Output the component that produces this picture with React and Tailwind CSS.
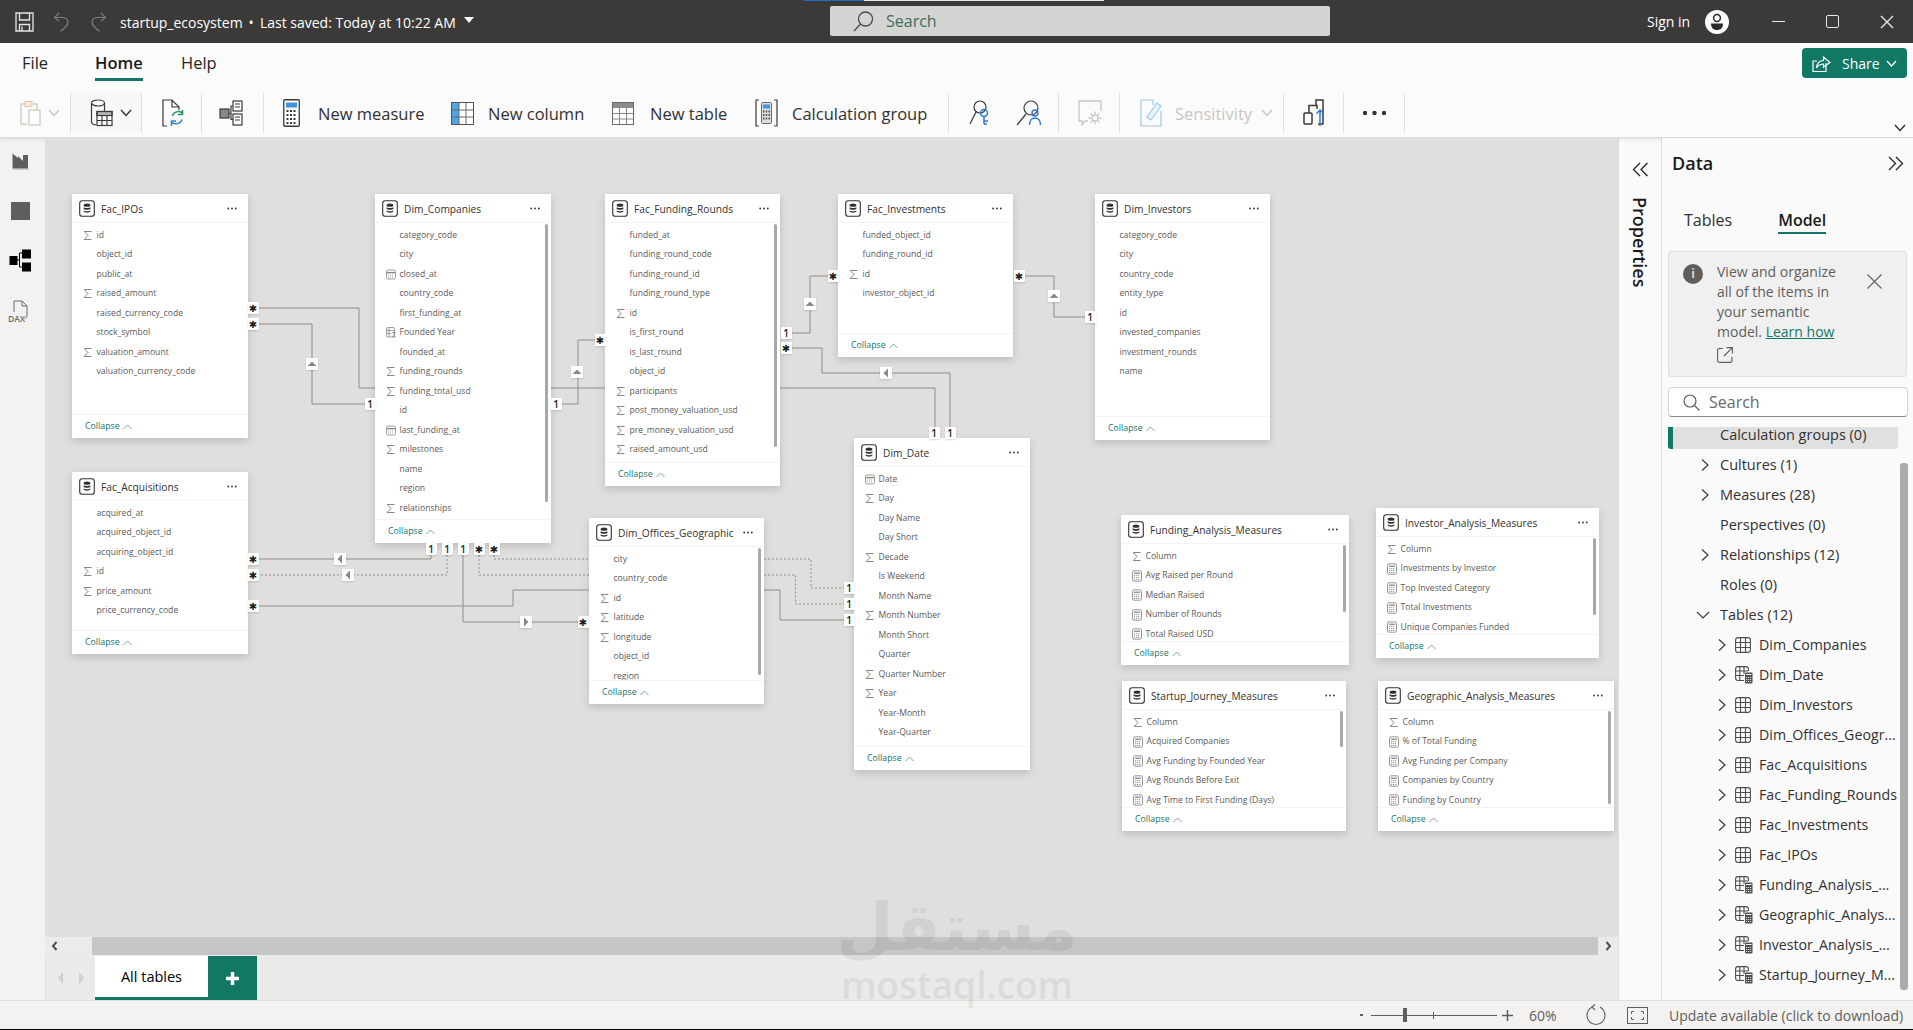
import React from 'react';

const FONT = '"Open Sans", "Noto Sans", sans-serif';

// ---------- small field icons ----------
const Sigma = () => (
  <svg width="10" height="11" viewBox="0 0 10 11" fill="none" stroke="#7a7876" strokeWidth="0.9">
    <path d="M8.5 1.5H1.2L5 5.5L1.2 9.5H8.5" />
  </svg>
);
const CalIcon = () => (
  <svg width="10" height="11" viewBox="0 0 10 11" fill="none" stroke="#8a8886" strokeWidth="0.8">
    <rect x="0.5" y="1" width="9" height="9" rx="1.5" />
    <path d="M0.5 3.6H9.5" strokeWidth="1.4" />
    <path d="M2 6H8M2 8H8" strokeDasharray="1 1" />
  </svg>
);
const CalcColIcon = () => (
  <svg width="11" height="11" viewBox="0 0 11 11" fill="none" stroke="#8a8886" strokeWidth="0.8">
    <rect x="0.5" y="0.5" width="8" height="9.5" rx="1.5" />
    <path d="M3 0.5V10M0.5 3.5H8.5M0.5 6.5H5" />
    <path d="M10 5.5H6.5L8.3 7.7L6.5 10H10" />
  </svg>
);
const MeasureIcon = () => (
  <svg width="10" height="12" viewBox="0 0 10 12" fill="none" stroke="#7d7b79" strokeWidth="0.8">
    <rect x="0.5" y="0.8" width="9" height="10.4" rx="1.6" />
    <path d="M2 3.2H8" strokeWidth="1.2" />
    <path d="M2 5.6H8M2 7.6H8M2 9.5H8" strokeDasharray="1.2 0.8" />
  </svg>
);
const FIELD = { s: Sigma, c: CalIcon, f: CalcColIcon, m: MeasureIcon };

const CardIcon = () => (
  <svg width="16" height="17" viewBox="0 0 16 17" fill="none">
    <rect x="0.7" y="0.7" width="14.6" height="15.6" rx="2.6" stroke="#323130" strokeWidth="1.1" />
    <ellipse cx="8" cy="5.2" rx="3.4" ry="1.6" fill="#323130" />
    <path d="M4.6 7.2C5.5 8.3 10.5 8.3 11.4 7.2V9C10.5 10.1 5.5 10.1 4.6 9Z" fill="#323130" />
    <path d="M4.6 10.4C5.5 11.5 10.5 11.5 11.4 10.4V11.6C10.5 13 5.5 13 4.6 11.6Z" fill="#323130" />
  </svg>
);

const Dots = () => (
  <svg width="10" height="3" viewBox="0 0 10 3" fill="#323130">
    <circle cx="1.2" cy="1.5" r="0.9" />
    <circle cx="5" cy="1.5" r="0.9" />
    <circle cx="8.8" cy="1.5" r="0.9" />
  </svg>
);

// ---------- model tables ----------
const f = (name, icon) => ({ name, icon });
const n = (...names) => names.map((name) => f(name));

const TABLES = [
  { name: 'Fac_IPOs', x: 72, y: 194, w: 176, h: 244, rows: [f('id', 's'), ...n('object_id', 'public_at'), f('raised_amount', 's'), ...n('raised_currency_code', 'stock_symbol'), f('valuation_amount', 's'), f('valuation_currency_code')] },
  { name: 'Dim_Companies', x: 375, y: 194, w: 176, h: 349, scroll: [30, 278], rows: [...n('category_code', 'city'), f('closed_at', 'c'), ...n('country_code', 'first_funding_at'), f('Founded Year', 'f'), f('founded_at'), f('funding_rounds', 's'), f('funding_total_usd', 's'), f('id'), f('last_funding_at', 'c'), f('milestones', 's'), ...n('name', 'region'), f('relationships', 's')] },
  { name: 'Fac_Funding_Rounds', x: 605, y: 194, w: 175, h: 292, scroll: [30, 223], rows: [...n('funded_at', 'funding_round_code', 'funding_round_id', 'funding_round_type'), f('id', 's'), ...n('is_first_round', 'is_last_round', 'object_id'), f('participants', 's'), f('post_money_valuation_usd', 's'), f('pre_money_valuation_usd', 's'), f('raised_amount_usd', 's')] },
  { name: 'Fac_Investments', x: 838, y: 194, w: 175, h: 163, rows: [...n('funded_object_id', 'funding_round_id'), f('id', 's'), f('investor_object_id')] },
  { name: 'Dim_Investors', x: 1095, y: 194, w: 175, h: 246, rows: n('category_code', 'city', 'country_code', 'entity_type', 'id', 'invested_companies', 'investment_rounds', 'name') },
  { name: 'Fac_Acquisitions', x: 72, y: 472, w: 176, h: 182, rows: [...n('acquired_at', 'acquired_object_id', 'acquiring_object_id'), f('id', 's'), f('price_amount', 's'), f('price_currency_code')] },
  { name: 'Dim_Offices_Geographic', x: 589, y: 518, w: 175, h: 186, scroll: [30, 127], rows: [...n('city', 'country_code'), f('id', 's'), f('latitude', 's'), f('longitude', 's'), ...n('object_id', 'region')] },
  { name: 'Dim_Date', x: 854, y: 438, w: 176, h: 332, rows: [f('Date', 'c'), f('Day', 's'), ...n('Day Name', 'Day Short'), f('Decade', 's'), ...n('Is Weekend', 'Month Name'), f('Month Number', 's'), ...n('Month Short', 'Quarter'), f('Quarter Number', 's'), f('Year', 's'), ...n('Year-Month', 'Year-Quarter')] },
  { name: 'Funding_Analysis_Measures', x: 1121, y: 515, w: 228, h: 150, scroll: [30, 67], rows: [f('Column', 's'), f('Avg Raised per Round', 'm'), f('Median Raised', 'm'), f('Number of Rounds', 'm'), f('Total Raised USD', 'm')] },
  { name: 'Investor_Analysis_Measures', x: 1376, y: 508, w: 223, h: 150, scroll: [30, 77], rows: [f('Column', 's'), f('Investments by Investor', 'm'), f('Top Invested Category', 'm'), f('Total Investments', 'm'), f('Unique Companies Funded', 'm')] },
  { name: 'Startup_Journey_Measures', x: 1122, y: 681, w: 224, h: 150, scroll: [30, 36], rows: [f('Column', 's'), f('Acquired Companies', 'm'), f('Avg Funding by Founded Year', 'm'), f('Avg Rounds Before Exit', 'm'), f('Avg Time to First Funding (Days)', 'm')] },
  { name: 'Geographic_Analysis_Measures', x: 1378, y: 681, w: 236, h: 150, scroll: [30, 93], rows: [f('Column', 's'), f('% of Total Funding', 'm'), f('Avg Funding per Company', 'm'), f('Companies by Country', 'm'), f('Funding by Country', 'm')] },
];

const TableCard = ({ t }) => (
  <div
    className="absolute flex flex-col bg-white shadow-[0_3px_8px_rgba(0,0,0,0.16)]"
    style={{ left: t.x - 45, top: t.y - 138, width: t.w, height: t.h }}
  >
    <div className="flex h-[29px] shrink-0 items-center border-b border-[#f5f4f3] pl-[7px] pr-[11px]">
      <CardIcon />
      <span className="ml-[6px] pt-[3px] text-[10.2px] text-[#323130]">{t.name}</span>
      <span className="ml-auto flex pt-[1px]"><Dots /></span>
    </div>
    <div className="min-h-0 flex-1 overflow-hidden pt-[2.5px]">
      {t.rows.map((r) => {
        const Icon = FIELD[r.icon];
        return (
          <div key={r.name} className="flex h-[19.5px] items-center pl-[11px] text-[8.6px] text-[#5b5957]">
            <span className="flex w-[13.5px] shrink-0 items-center">{Icon && <Icon />}</span>
            <span className="whitespace-nowrap">{r.name}</span>
          </div>
        );
      })}
    </div>
    <div className="flex h-[24px] shrink-0 items-center gap-[3px] border-t border-[#f5f4f3] pl-[13px] text-[8.8px] text-[#17756a]">
      Collapse
      <svg width="9" height="6" viewBox="0 0 9 6" fill="none" stroke="#5b8f86" strokeWidth="0.8"><path d="M0.5 5L4.5 1L8.5 5" /></svg>
    </div>
    {t.scroll && (
      <div className="absolute right-[3px] w-[3px] rounded-full bg-[#a8a8a8]" style={{ top: t.scroll[0], height: t.scroll[1] }} />
    )}
  </div>
);

// ---------- relationship lines ----------
const LINES = [
  { d: 'M259 308H359V388H375' },
  { d: 'M259 324H312V404H365' },
  { d: 'M562 404H578V340H595' },
  { d: 'M551 388H605' },
  { d: 'M780 388H935V428' },
  { d: 'M791 348H822V373H950V428' },
  { d: 'M791 333H810V276H828' },
  { d: 'M1024 276H1054V317H1085' },
  { d: 'M431 555V559H259' },
  { d: 'M447 555V575H259', dash: true },
  { d: 'M463 555V622H578' },
  { d: 'M259 606H513V590H589' },
  { d: 'M764 590H780V620H844' },
  { d: 'M479 555V575H589', dash: true },
  { d: 'M764 575H795.5V604H844', dash: true },
  { d: 'M494 555V559H589', dash: true },
  { d: 'M764 559H811V588H844', dash: true },
];

const BADGES = [
  ['✱', 253, 308], ['✱', 253, 324], ['1', 370, 404], ['1', 556, 404], ['✱', 600, 340],
  ['1', 786, 333], ['✱', 786, 348], ['✱', 833, 276], ['✱', 1019, 276], ['1', 1090, 317],
  ['1', 934, 433], ['1', 950, 433],
  ['1', 431, 549], ['1', 447, 549], ['1', 463, 549], ['✱', 479, 549], ['✱', 494, 549],
  ['✱', 253, 559], ['✱', 253, 575], ['✱', 253, 606], ['✱', 583, 622],
  ['1', 849, 588], ['1', 849, 604], ['1', 849, 620],
];

const ARROWS = [
  ['up', 312, 364], ['up', 577, 372], ['up', 810, 304], ['up', 1054, 296],
  ['left', 886, 373], ['left', 340, 559], ['left', 348, 575], ['right', 526, 622],
];
const TRI = { up: 'M1.5 8L6 3.5L10.5 8Z', left: 'M8 1.5L3.5 6L8 10.5Z', right: 'M4 1.5L8.5 6L4 10.5Z' };

const Badge = ({ text, x, y }) => (
  <div
    className="absolute flex h-[12px] w-[11px] items-center justify-center rounded-[1px] bg-white text-[10px] font-semibold text-[#201f1e] shadow-[0_1px_2px_rgba(0,0,0,0.15)]"
    style={{ left: x - 45 - 5.5, top: y - 138 - 6, fontFamily: text === '1' ? FONT : '"DejaVu Sans", sans-serif' }}
  >
    {text}
  </div>
);

const ArrowBox = ({ dir, x, y }) => (
  <div
    className="absolute flex h-[12px] w-[12px] items-center justify-center rounded-[1px] bg-white shadow-[0_1px_2px_rgba(0,0,0,0.15)]"
    style={{ left: x - 45 - 6, top: y - 138 - 6 }}
  >
    <svg width="12" height="12" viewBox="0 0 12 12" fill="#8a8886"><path d={TRI[dir]} /></svg>
  </div>
);

const Canvas = () => (
  <div className="relative min-h-0 flex-1 overflow-hidden bg-[#e0dfdd]">
    <svg className="absolute inset-0 h-full w-full" fill="none" stroke="#8f8e8c" strokeWidth="1">
      <g transform="translate(-45 -138)">
        {LINES.map((l) => (
          <path key={l.d} d={l.d} strokeDasharray={l.dash ? '2 2' : undefined} />
        ))}
      </g>
    </svg>
    {TABLES.map((t) => <TableCard key={t.name} t={t} />)}
    {ARROWS.map(([dir, x, y]) => <ArrowBox key={`${x}-${y}`} dir={dir} x={x} y={y} />)}
    {BADGES.map(([text, x, y]) => <Badge key={`${x}-${y}`} text={text} x={x} y={y} />)}
  </div>
);

// ---------- title bar ----------
const TitleBar = () => (
  <div className="relative flex h-[43px] shrink-0 items-center bg-[#3b3a39] text-white">
    <div className="absolute left-[804px] top-0 h-[1px] w-[60px] bg-[#1b6ec2]" />
    <div className="absolute left-[864px] top-0 h-[1px] w-[240px] bg-[#e8e8e8]" />
    <svg className="ml-[15px]" width="19" height="20" viewBox="0 0 19 20" fill="none" stroke="#e6e6e6" strokeWidth="1.3">
      <path d="M1 1H18V19H1Z" />
      <path d="M4.5 1V8H14.5V1M4.5 19V12.5H14.5V19M7 14.5V19" />
    </svg>
    <svg className="ml-[19px]" width="17" height="20" viewBox="0 0 17 20" fill="none" stroke="#7d7c7a" strokeWidth="1.2">
      <path d="M6 1L1.5 5.5L6 9" />
      <path d="M1.5 5.5H10C15 5.5 16.5 11 13 14.5L7.5 19.5" />
    </svg>
    <svg className="ml-[20px]" width="17" height="20" viewBox="0 0 17 20" fill="none" stroke="#7d7c7a" strokeWidth="1.2">
      <path d="M11 1L15.5 5.5L11 9" />
      <path d="M15.5 5.5H7C2 5.5 0.5 11 4 14.5L9.5 19.5" />
    </svg>
    <span className="ml-[13px] pt-[3px] text-[14px] leading-none">startup_ecosystem</span>
    <span className="ml-[6px] pt-[3px] text-[14px] leading-none">•</span>
    <span className="ml-[6px] pt-[3px] text-[14px] leading-none">Last saved: Today at 10:22 AM</span>
    <div className="mb-[3px] ml-[8px] h-0 w-0 border-x-[5px] border-t-[6px] border-x-transparent border-t-white" />

    <div className="absolute left-[830px] top-[6px] flex h-[30px] w-[500px] items-center rounded-[2px] bg-[#d4d4d2] pl-[22px]">
      <svg width="22" height="21" viewBox="0 0 22 21" fill="none" stroke="#4a4a48" strokeWidth="1.3">
        <circle cx="13.5" cy="8" r="7" />
        <path d="M8.5 13L2 20" />
      </svg>
      <span className="ml-[12px] text-[16px] text-[#3f6d62]">Search</span>
    </div>

    <span className="absolute left-[1647px] text-[14px]">Sign in</span>
    <svg className="absolute left-[1705px]" width="24" height="24" viewBox="0 0 24 24">
      <circle cx="12" cy="12" r="12" fill="#fff" />
      <circle cx="12" cy="8" r="3.4" fill="none" stroke="#2b2a29" strokeWidth="1.5" />
      <path d="M6 13.5H18C18 18 15.5 20 12 20C8.5 20 6 18 6 13.5Z" fill="#2b2a29" />
    </svg>
    <div className="absolute left-[1772px] h-[1.5px] w-[13px] bg-[#e8e8e8]" />
    <div className="absolute left-[1826px] h-[13px] w-[13px] rounded-[2px] border-[1.5px] border-[#e8e8e8]" />
    <svg className="absolute left-[1880px]" width="14" height="14" viewBox="0 0 14 14" stroke="#e8e8e8" strokeWidth="1.4">
      <path d="M1 1L13 13M13 1L1 13" />
    </svg>
  </div>
);

// ---------- ribbon ----------
const MenuRow = () => (
  <div className="relative flex h-[50px] shrink-0 items-start bg-[#fbfbfb] pt-[7px] text-[16.5px] text-[#252423]">
    <span className="ml-[22px] w-[26px] leading-[26px]">File</span>
    <div className="ml-[47px] flex w-[48px] flex-col">
      <span className="font-semibold leading-[26px] text-[#1b1a19]">Home</span>
      <div className="mt-[2px] h-[3px] bg-[#117865]" />
    </div>
    <span className="ml-[38px] leading-[26px]">Help</span>
    <div className="absolute left-[1802px] top-[5px] flex h-[30px] w-[105px] items-center rounded-[4px] bg-[#117865] pl-[10px] text-[14px] text-white">
      <svg width="19" height="19" viewBox="0 0 19 19" fill="none" stroke="#fff" strokeWidth="1.2">
        <path d="M14 9V17.5H1V7H5" />
        <path d="M4.5 14C5 9 8 6.5 11.5 6.5V3L18 8.5L11.5 13V10C8.5 10 6 11.5 4.5 14Z" />
      </svg>
      <span className="ml-[11px]">Share</span>
      <svg className="ml-[6px]" width="11" height="7" viewBox="0 0 11 7" fill="none" stroke="#fff" strokeWidth="1.2"><path d="M1 1L5.5 6L10 1" /></svg>
    </div>
  </div>
);

const Sep = () => <div className="h-[40px] w-[1px] shrink-0 bg-[#e1dfdd]" />;

const Chevron = ({ color = '#323130', className = '' }) => (
  <svg className={className} width="12" height="8" viewBox="0 0 12 8" fill="none" stroke={color} strokeWidth="1.4"><path d="M1 1L6 6.5L11 1" /></svg>
);

const MeasureRibbon = () => (
  <svg width="17" height="28" viewBox="0 0 17 28" fill="none">
    <rect x="0.75" y="0.75" width="15.5" height="26.5" rx="1" stroke="#3b3a39" strokeWidth="1.3" fill="#fff" />
    <rect x="3" y="3.5" width="11" height="5" fill="#3f95d8" />
    <path d="M3.5 12H13.5M3.5 16H13.5M3.5 20H13.5M3.5 24H13.5" stroke="#3b3a39" strokeWidth="2" strokeDasharray="2 1.5" />
  </svg>
);
const ColumnRibbon = () => (
  <svg width="23" height="23" viewBox="0 0 23 23">
    <rect x="0.5" y="0.5" width="22" height="22" fill="#fff" stroke="#55534f" />
    <rect x="1" y="1" width="7" height="21" fill="#4ea6e6" />
    <path d="M8 1V22M15 1V22M1 8H22M1 15H22" stroke="#6d6b68" fill="none" />
  </svg>
);
const TableRibbon = () => (
  <svg width="22" height="23" viewBox="0 0 22 23">
    <rect x="0.5" y="0.5" width="21" height="22" fill="#fff" stroke="#6b6966" />
    <rect x="1" y="1" width="20" height="5" fill="#8f8d8a" />
    <path d="M7.5 6V22M14.5 6V22M1 11.5H21M1 17H21" stroke="#8a8886" fill="none" />
  </svg>
);
const CalcGroupRibbon = () => (
  <svg width="23" height="28" viewBox="0 0 23 28" fill="none">
    <path d="M4 1H1V27H4M19 1H22V27H19" stroke="#3b3a39" strokeWidth="1.2" />
    <rect x="6.5" y="3.5" width="10" height="21" rx="1" stroke="#6b6966" fill="#ddd" />
    <rect x="8" y="5.5" width="7" height="4" fill="#3f95d8" />
    <path d="M8 12.5H15M8 16H15M8 19.5H15" stroke="#55534f" strokeWidth="2" strokeDasharray="1.5 1.25" />
  </svg>
);
const PersonKey = () => (
  <svg width="24" height="26" viewBox="0 0 24 26" fill="none">
    <circle cx="11" cy="7" r="6" stroke="#3b3a39" strokeWidth="1.2" />
    <path d="M7 12L1 24" stroke="#3b3a39" strokeWidth="1.2" />
    <circle cx="15" cy="13" r="3.5" stroke="#2b7cd3" strokeWidth="1.5" />
    <path d="M15 16V24M15 21H19M15 24H18" stroke="#2b7cd3" strokeWidth="1.5" />
  </svg>
);
const PersonView = () => (
  <svg width="27" height="26" viewBox="0 0 27 26" fill="none">
    <circle cx="15" cy="8" r="7" stroke="#3b3a39" strokeWidth="1.2" />
    <path d="M10 14L1 25" stroke="#3b3a39" strokeWidth="1.2" />
    <circle cx="19" cy="13" r="3" stroke="#2b7cd3" strokeWidth="1.4" />
    <path d="M13.5 25C13.5 20.5 16 18 19 18C22 18 24.5 20.5 24.5 25" stroke="#2b7cd3" strokeWidth="1.4" />
  </svg>
);

const Toolbar = () => (
  <div className="relative flex h-[45px] shrink-0 items-start border-b-[1px] border-[#dcdbd9] bg-[#fbfbfb] text-[16.5px] text-[#323130] shadow-[0_2px_3px_rgba(0,0,0,0.08)]">
    <div className="flex h-[40px] w-[70px] items-center pl-[18px]">
      <svg width="24" height="26" viewBox="0 0 24 26" fill="none">
        <path d="M15 4H19V10M8 4H3V24H9" stroke="#d8cfc0" strokeWidth="1.5" />
        <rect x="7" y="1.5" width="7" height="5" stroke="#e3c79b" fill="#f5ecdc" />
        <rect x="11" y="10" width="11" height="15" stroke="#c8c6c4" fill="#fff" strokeWidth="1.2" />
      </svg>
      <Chevron color="#c8c6c4" className="ml-[6px]" />
    </div>
    <Sep />
    <div className="flex h-[40px] w-[70px] items-center bg-[#f8f8f8] pl-[19px]">
      <svg width="26" height="28" viewBox="0 0 26 28" fill="none" stroke="#3b3a39" strokeWidth="1.2">
        <ellipse cx="8" cy="4" rx="6.5" ry="3" />
        <path d="M1.5 4V23C1.5 24.5 3 25.5 6 26M14.5 4V12" />
        <rect x="7" y="12.5" width="15" height="14" fill="#fff" />
        <rect x="7" y="12.5" width="15" height="4" fill="#77757280" />
        <path d="M12 16.5V26.5M17 16.5V26.5M7 21.5H22" />
      </svg>
      <Chevron className="ml-[4px]" />
    </div>
    <Sep />
    <div className="flex h-[40px] w-[59px] items-center pl-[20px]">
      <svg width="24" height="29" viewBox="0 0 24 29" fill="none">
        <path d="M5 27H1V1H10L17 8V11M10 1V8H17" stroke="#3b3a39" strokeWidth="1.2" />
        <path d="M21 15C19 11.5 12 11.5 10.5 17M20.5 11V15.5H16" stroke="#1f9254" strokeWidth="1.5" />
        <path d="M9 22C11 26 18 26 20 20.5M9.5 27V22H14" stroke="#3b82c4" strokeWidth="1.5" />
      </svg>
    </div>
    <Sep />
    <div className="flex h-[40px] w-[61px] items-center pl-[17px]">
      <svg width="24" height="26" viewBox="0 0 24 26" fill="none" stroke="#3b3a39" strokeWidth="1.2">
        <rect x="1" y="9" width="9" height="9" fill="#8a8886" />
        <rect x="14" y="1" width="9" height="10" fill="#fff" />
        <rect x="14" y="14" width="9" height="11" fill="#fff" />
        <path d="M10 13.5H12V6H14M12 13.5V19.5H14M16 4H21M16 7H21M16 17H21M16 20H21" />
      </svg>
    </div>
    <Sep />
    <div className="flex h-[40px] w-[684px] items-center pl-[19px]">
      <MeasureRibbon />
      <span className="ml-[18px] mt-[2px] w-[105px] whitespace-nowrap">New measure</span>
      <span className="ml-[28px] flex"><ColumnRibbon /></span>
      <span className="ml-[14px] mt-[2px] w-[97px] whitespace-nowrap">New column</span>
      <span className="ml-[27px] flex"><TableRibbon /></span>
      <span className="ml-[16px] mt-[2px] w-[77px] whitespace-nowrap">New table</span>
      <span className="ml-[28px] flex"><CalcGroupRibbon /></span>
      <span className="ml-[14px] mt-[2px] w-[137px] whitespace-nowrap">Calculation group</span>
    </div>
    <Sep />
    <div className="flex h-[40px] w-[109px] items-center pl-[20px]">
      <PersonKey />
      <span className="ml-[23px] flex"><PersonView /></span>
    </div>
    <Sep />
    <div className="flex h-[40px] w-[60px] items-center pl-[19px]">
      <svg width="24" height="26" viewBox="0 0 24 26" fill="none" stroke="#c8c6c4" strokeWidth="1.3">
        <path d="M10 21H7L4 25V21H1V1H23V11" />
        <circle cx="17" cy="18" r="3" />
        <path d="M17 11.5V14M17 22V24.5M10.5 18H13M21 18H23.5M12.5 13.5L14.5 15.5M19.5 20.5L21.5 22.5M21.5 13.5L19.5 15.5M14.5 20.5L12.5 22.5" />
      </svg>
    </div>
    <Sep />
    <div className="flex h-[40px] w-[163px] items-center pl-[20px] text-[#c8c6c4]">
      <svg width="22" height="28" viewBox="0 0 22 28" fill="none" strokeWidth="1.2">
        <path d="M1 1H13L13 6M1 1V27H21V12" stroke="#9dc9ea" />
        <path d="M7 18L17 4L21 7L11 21Z" stroke="#9dc9ea" fill="#e8f3fb" />
      </svg>
      <span className="ml-[13px] mt-[2px] w-[79px] whitespace-nowrap">Sensitivity</span>
      <Chevron color="#c8c6c4" className="ml-[7px]" />
    </div>
    <Sep />
    <div className="flex h-[40px] w-[59px] items-center pl-[19px]">
      <svg width="24" height="30" viewBox="0 0 24 30" fill="none" stroke="#3b3a39" strokeWidth="1.5">
        <rect x="1" y="15" width="8" height="11" rx="1" />
        <path d="M6 15V7.5H14V11" />
        <path d="M13 8V2H20V26H15" />
        <path d="M17 28V12M13.5 15.5L17 12L20.5 15.5" stroke="#2b7cd3" />
      </svg>
    </div>
    <Sep />
    <div className="flex h-[40px] w-[60px] items-center pl-[19px]">
      <svg width="23" height="4" viewBox="0 0 23 4" fill="#323130">
        <rect x="0" y="0" width="4" height="4" rx="1.2" />
        <rect x="9.5" y="0" width="4" height="4" rx="1.2" />
        <rect x="19" y="0" width="4" height="4" rx="1.2" />
      </svg>
    </div>
    <Sep />
    <Chevron className="absolute left-[1894px] top-[31px]" />
  </div>
);

// ---------- left rail ----------
const LeftRail = () => (
  <div className="flex w-[45px] shrink-0 flex-col items-center bg-[#f3f2f1] pr-[5px] pt-[15px]">
    <svg width="17" height="17" viewBox="0 0 17 17">
      <path d="M0.5 0.5L6 5V3L11 8V2H16V15.5H0.5Z" fill="#605e5c" />
      <path d="M0.5 16H16.5" stroke="#a19f9d" />
    </svg>
    <div className="mt-[32px] h-[18px] w-[19px] bg-[#5f5e5c]" />
    <svg className="mt-[29px]" width="23" height="23" viewBox="0 0 23 23">
      <rect x="0.5" y="7" width="8" height="9" fill="#000" />
      <rect x="13" y="0.5" width="9" height="9" fill="#000" />
      <rect x="13" y="13.5" width="9" height="9" fill="#000" />
      <path d="M8 11H10.5V4H13M10.5 11V18H13" stroke="#000" fill="none" />
    </svg>
    <svg className="mt-[28px]" width="24" height="23" viewBox="0 0 24 23" fill="none" stroke="#6d6b69" strokeWidth="1">
      <path d="M6 12V1H14L19 6V15C19 17 18 18 16.5 19M14 1V6H19" />
      <text x="0" y="22" fontSize="8.5" fill="#6d6b69" stroke="none" fontFamily={FONT} fontWeight="600">DAX</text>
    </svg>
  </div>
);

// ---------- bottom of the canvas ----------
const HScroll = () => (
  <div className="flex h-[18px] shrink-0 items-center bg-[#ebebeb]">
    <div className="flex w-[47px] pl-[6px]">
      <svg width="7" height="10" viewBox="0 0 7 10" fill="none" stroke="#505050" strokeWidth="2"><path d="M5.5 1L2 5L5.5 9" /></svg>
    </div>
    <div className="h-full flex-1 bg-[#c6c6c6]" />
    <div className="flex w-[20px] justify-center">
      <svg width="7" height="10" viewBox="0 0 7 10" fill="none" stroke="#505050" strokeWidth="2"><path d="M1.5 1L5 5L1.5 9" /></svg>
    </div>
  </div>
);

const TabBar = () => (
  <div className="flex h-[45px] shrink-0 bg-[#eaeaea] pt-[1px]">
    <div className="flex w-[50px] items-center justify-center gap-[16px] border-l border-[#e1dfdd]">
      <div className="h-0 w-0 border-y-[6px] border-r-[5px] border-y-transparent border-r-[#d2d0ce]" />
      <div className="h-0 w-0 border-y-[6px] border-l-[5px] border-y-transparent border-l-[#d2d0ce]" />
    </div>
    <div className="flex w-[113px] items-center justify-center border-b-[3px] border-[#117865] bg-white text-[14.5px] font-medium text-black">
      All tables
    </div>
    <div className="flex w-[49px] items-center justify-center bg-[#117865]">
      <svg width="15" height="15" viewBox="0 0 15 15" stroke="#fff" strokeWidth="3.5"><path d="M7.5 1V14M1 7.5H14" /></svg>
    </div>
  </div>
);

// ---------- right panes ----------
const PropertiesRail = () => (
  <div className="flex w-[44px] shrink-0 flex-col items-center border-x border-[#e1dfdd] bg-[#fafafa] pt-[24px]">
    <svg width="17" height="15" viewBox="0 0 17 15" fill="none" stroke="#252423" strokeWidth="1.3">
      <path d="M8 1L1.5 7.5L8 14M15.5 1L9 7.5L15.5 14" />
    </svg>
    <span className="mt-[20px] text-[18px] font-semibold leading-none text-[#1b1a19] [writing-mode:vertical-rl]">Properties</span>
  </div>
);

const TreeChevron = ({ open }) => (
  <svg width="14" height="14" viewBox="0 0 14 14" fill="none" stroke="#3b3a39" strokeWidth="1.2">
    <path d={open ? 'M1 4L7 10L13 4' : 'M4 1.5L10 7L4 12.5'} />
  </svg>
);

const GridIcon = () => (
  <svg width="16" height="16" viewBox="0 0 16 16" fill="none" stroke="#504e4c" strokeWidth="1.1">
    <rect x="0.6" y="0.6" width="14.8" height="14.8" rx="2.5" />
    <path d="M5.5 0.6V15.4M10.5 0.6V15.4M0.6 5.5H15.4M0.6 10.5H15.4" />
  </svg>
);
const CalcTableIcon = () => (
  <svg width="18" height="18" viewBox="0 0 18 18" fill="none" stroke="#504e4c" strokeWidth="1.1">
    <path d="M9 14.5H3C1.5 14.5 0.6 13.5 0.6 12V3C0.6 1.5 1.5 0.6 3 0.6H11C12.5 0.6 13.4 1.5 13.4 3V5" />
    <path d="M4.8 0.6V14.5M9 0.6V8M0.6 5H13M0.6 9.5H9" />
    <rect x="10" y="6.5" width="7.5" height="11" rx="1" fill="#504e4c" stroke="none" />
    <path d="M11 8.5H16.5" stroke="#fff" strokeWidth="1" />
    <path d="M11 11.5H16.5M11 13.5H16.5M11 15.5H16.5" stroke="#fff" strokeWidth="0.8" strokeDasharray="1.2 0.8" />
  </svg>
);

const TREE = [
  { label: 'Cultures (1)', arrow: true },
  { label: 'Measures (28)', arrow: true },
  { label: 'Perspectives (0)' },
  { label: 'Relationships (12)', arrow: true },
  { label: 'Roles (0)' },
];
const SUB = [
  ['Dim_Companies', GridIcon], ['Dim_Date', CalcTableIcon], ['Dim_Investors', GridIcon],
  ['Dim_Offices_Geogr...', GridIcon], ['Fac_Acquisitions', GridIcon], ['Fac_Funding_Rounds', GridIcon],
  ['Fac_Investments', GridIcon], ['Fac_IPOs', GridIcon], ['Funding_Analysis_...', CalcTableIcon],
  ['Geographic_Analys...', CalcTableIcon], ['Investor_Analysis_...', CalcTableIcon], ['Startup_Journey_M...', CalcTableIcon],
];

const DataPane = () => (
  <div className="relative w-[251px] shrink-0 bg-[#fafafa] text-[#323130]">
    <div className="flex h-[52px] items-center justify-between pb-[1px] pl-[10px] pr-[9px]">
      <span className="text-[18px] font-semibold text-[#1b1a19]">Data</span>
      <svg width="16" height="15" viewBox="0 0 16 15" fill="none" stroke="#252423" strokeWidth="1.3">
        <path d="M1 1L7.5 7.5L1 14M8 1L14.5 7.5L8 14" />
      </svg>
    </div>
    <div className="flex h-[49px] items-start pl-[22px] pt-[18px] text-[16px] leading-[24px]">
      <span>Tables</span>
      <div className="ml-[46px] flex flex-col font-semibold text-[#1b1a19]">
        Model
        <div className="h-[2px] bg-[#117865]" />
      </div>
    </div>
    <div className="relative ml-[6px] mt-[12px] h-[126px] w-[239px] rounded-[3px] border border-[#e1dfdd] bg-[#f0f0f0] pl-[48px] pt-[10px] text-[14px] leading-[20px] text-[#5f5d5b]">
      <div className="absolute left-[14px] top-[12px] flex h-[20px] w-[20px] items-center justify-center rounded-full bg-[#605e5c] text-[12px] font-bold text-[#d8d8d8]">i</div>
      <p>View and organize</p>
      <p>all of the items in</p>
      <p>your semantic</p>
      <p>model. <span className="text-[#117865] underline">Learn how</span></p>
      <svg className="mt-[5px]" width="16" height="16" viewBox="0 0 16 16" fill="none" stroke="#605e5c" strokeWidth="1.1">
        <path d="M6 1.5H2.5C1.3 1.5 0.6 2.2 0.6 3.4V13.5C0.6 14.7 1.3 15.4 2.5 15.4H13C14.2 15.4 15 14.7 15 13.5V10M9.5 0.6H15.4V6.5M15.4 0.6L7 9" />
      </svg>
      <svg className="absolute left-[198px] top-[22px]" width="15" height="15" viewBox="0 0 15 15" stroke="#605e5c" strokeWidth="1.1">
        <path d="M0.5 0.5L14.5 14.5M14.5 0.5L0.5 14.5" />
      </svg>
    </div>
    <div className="ml-[6px] mt-[10px] flex h-[30px] w-[240px] items-center rounded-[4px] border border-[#d6d6d6] border-b-[#8a8886] bg-white pl-[14px] text-[16px] text-[#6b6a68]">
      <svg width="17" height="17" viewBox="0 0 17 17" fill="none" stroke="#605e5c" strokeWidth="1.2">
        <circle cx="7" cy="7" r="6" />
        <path d="M11.5 11.5L16.5 16.5" />
      </svg>
      <span className="ml-[9px]">Search</span>
    </div>
    <div className="relative ml-[6px] mt-[10px] h-[22px] w-[230px] rounded-b-[3px] bg-[#e0e0e0]">
      <div className="absolute bottom-0 left-0 top-0 w-[5px] rounded-bl-[3px] bg-[#117865]" />
      <div className="absolute left-[52px] top-[-3px] whitespace-nowrap text-[14.5px] leading-[22px]">Calculation groups (0)</div>
    </div>
    <div className="mt-[1px] text-[14.5px]">
      {TREE.map((r) => (
        <div key={r.label} className="flex h-[30px] items-center pl-[36px]">
          <span className="flex w-[22px]">{r.arrow && <TreeChevron />}</span>
          {r.label}
        </div>
      ))}
      <div className="flex h-[30px] items-center pl-[34px]">
        <span className="flex w-[24px]"><TreeChevron open /></span>
        Tables (12)
      </div>
      {SUB.map(([label, Icon]) => (
        <div key={label} className="flex h-[30px] items-center whitespace-nowrap pl-[53px] text-[14.2px]">
          <span className="flex w-[20px]"><TreeChevron /></span>
          <span className="flex w-[24px] items-center"><Icon /></span>
          {label}
        </div>
      ))}
    </div>
    <div className="absolute left-[238px] top-[325px] h-[527px] w-[8px] rounded-[3px] bg-[#ababab]" />
  </div>
);

const StatusBar = () => (
  <div className="relative flex h-[30px] shrink-0 items-center border-b border-t border-b-black border-t-[#e1dfdd] bg-[#f3f2f1] text-[14px] text-[#605e5c]">
    <div className="absolute left-[1360px] h-[2px] w-[3px] bg-[#605e5c]" />
    <div className="absolute left-[1371px] h-[1px] w-[126px] bg-[#605e5c]" />
    <div className="absolute left-[1403px] h-[14px] w-[4px] bg-[#605e5c]" />
    <div className="absolute left-[1433px] h-[7px] w-[1px] bg-[#605e5c]" />
    <svg className="absolute left-[1502px]" width="11" height="11" viewBox="0 0 11 11" stroke="#605e5c" strokeWidth="1.5"><path d="M5.5 0V11M0 5.5H11" /></svg>
    <span className="absolute left-[1529px]">60%</span>
    <svg className="absolute left-[1585px]" width="22" height="22" viewBox="0 0 22 22" fill="none" stroke="#605e5c" strokeWidth="1.1">
      <path d="M7 3C3.5 5 2 8 2 11.5C2 16.5 6 20.5 11 20.5C16 20.5 20 16.5 20 11.5C20 8 18 5 15 3" />
      <path d="M10 0.5L7 3L10 6" />
    </svg>
    <svg className="absolute left-[1627px]" width="21" height="17" viewBox="0 0 21 17" fill="none" stroke="#605e5c">
      <rect x="0.5" y="0.5" width="20" height="16" />
      <path d="M7 4.5H4.5V7M14 4.5H16.5V7M7 12.500H4.5V10M14 12.500H16.5V10" />
    </svg>
    <span className="absolute left-[1669px] whitespace-nowrap">Update available (click to download)</span>
  </div>
);

const Watermark = () => (
  <div className="pointer-events-none absolute left-[832px] top-[890px] flex w-[250px] flex-col items-center text-[#000] opacity-[0.06]">
    <span className="text-[66px] font-bold leading-[76px]" style={{ fontFamily: '"DejaVu Sans", sans-serif' }}>مستقل</span>
    <span className="text-[37px] font-semibold leading-[38px]">mostaql.com</span>
  </div>
);

export default function App() {
  return (
    <div className="relative flex h-[1030px] w-[1913px] flex-col overflow-hidden bg-[#f3f2f1]" style={{ fontFamily: FONT }}>
      <TitleBar />
      <MenuRow />
      <Toolbar />
      <div className="flex min-h-0 flex-1">
        <LeftRail />
        <div className="flex min-w-0 flex-1 flex-col">
          <Canvas />
          <HScroll />
          <TabBar />
        </div>
        <PropertiesRail />
        <DataPane />
      </div>
      <StatusBar />
      <Watermark />
    </div>
  );
}
